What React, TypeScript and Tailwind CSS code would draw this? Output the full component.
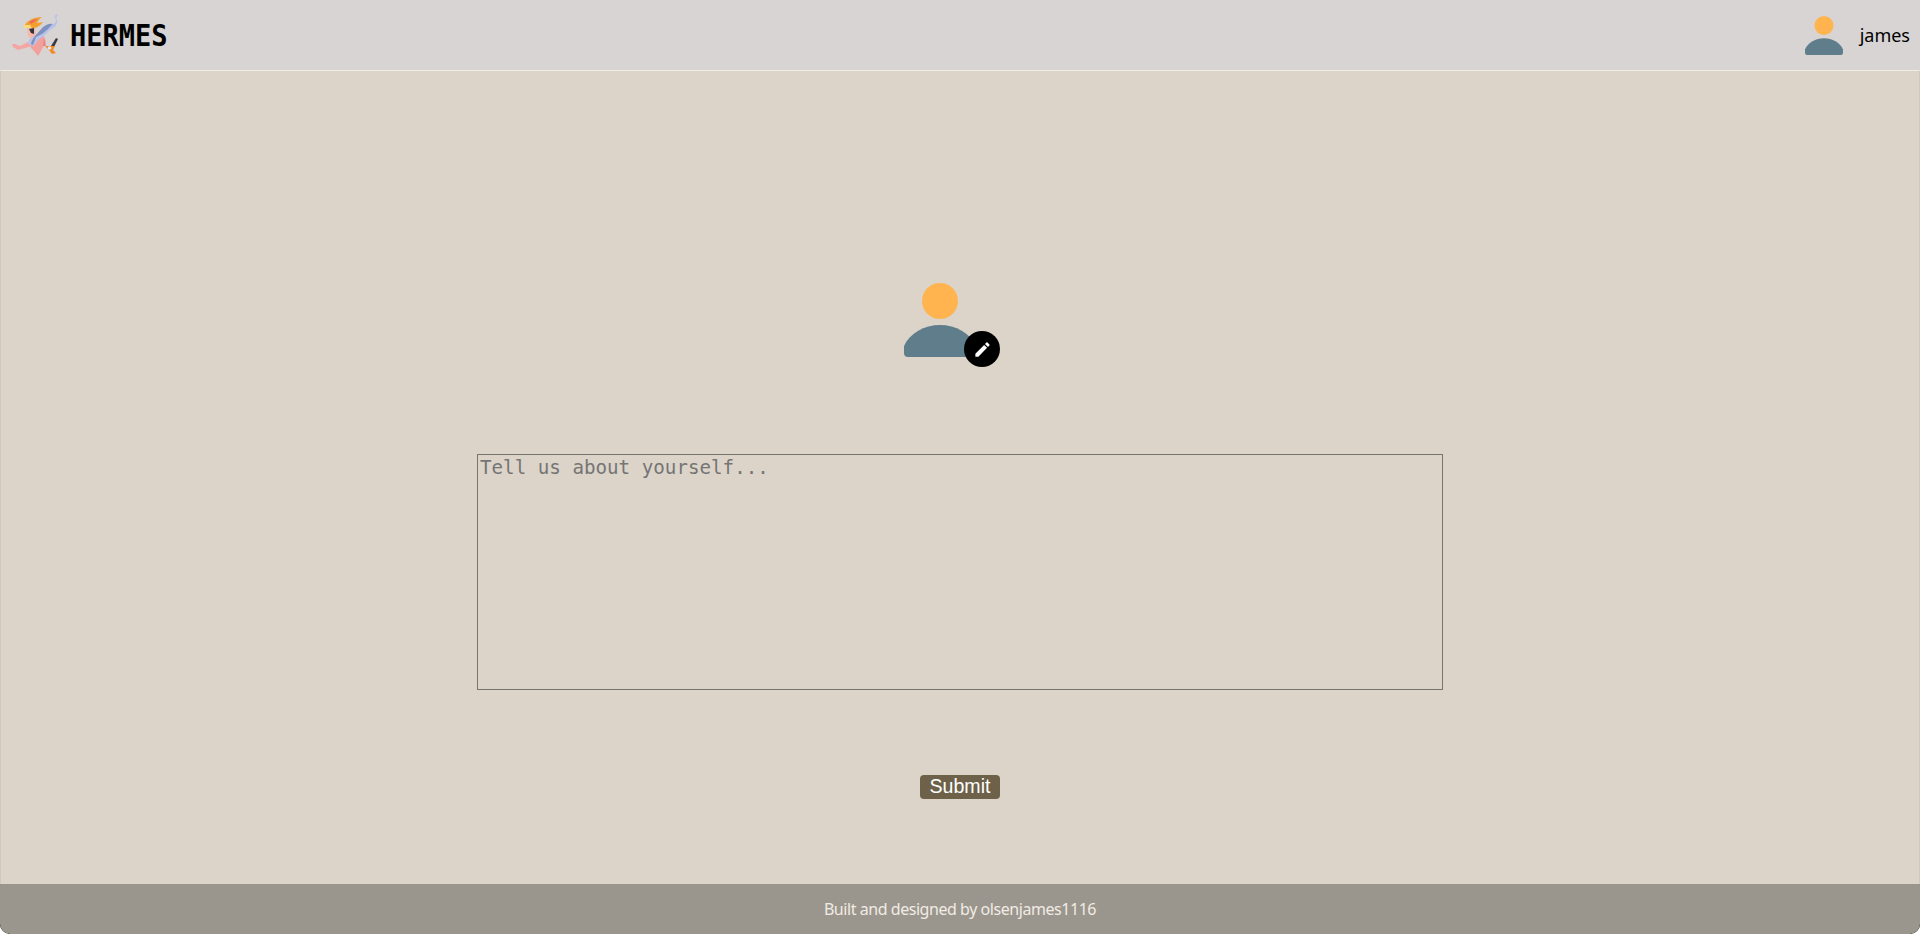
import React from "react";

function Person({ className }: { className: string }) {
  return (
    <svg viewBox="0 0 72 74" className={className}>
      <circle cx="36" cy="18" r="18" fill="#ffb44f" />
      <path d="M0 63 C6 50 20 42 36 42 C52 42 66 50 72 63 L72 70 Q72 74 68 74 L4 74 Q0 74 0 70 Z" fill="#607d8b" />
    </svg>
  );
}

function Logo() {
  return (
    <svg viewBox="10 10 50 50" className="w-[50px] h-[50px]">
      <path d="M32 46 L18 50 L13 47 L12 44 L15 44 L20 46 L28 42 Z" fill="#f3a6a2" />
      <path d="M29 40 L44 36 L46 42 L41 51 L38 56 L35 52 L31 48 Z" fill="#f2a09c" />
      <path d="M44 38 L46 46 L43 46 Z" fill="#e9838a" />
      <path d="M27 28 L35 27 L36 36 L32 40 L28 36 Z" fill="#f6b9a9" />
      <path d="M29 29 L34 28 L34 34 L31 33 Z" fill="#34343f" />
      <path d="M58 14 C53 15 55 18 56 20 C56 24 52 24 49 27 C46 30 42 31 38 33 L34 36 C30 38 28 41 28 44 L34 46 L38 40 L44 36 L50 30 C54 28 58 25 57 20 C55 17 58 16 58 14 Z" fill="#b9c3e6" />
      <path d="M43 27 C47 24 50 23 53 24 C51 25 50 27 48 29 L42 34 L36 37 L33 45 L31 44 C32 38 38 33 43 27 Z" fill="#7f90c2" />
      <path d="M24 26 C27 21 33 17 42 17 C39 19 38 21 37 23 C39 23 42 22 43 22 C41 25 38 27 35 28 L24 28 Z" fill="#f29f2e" />
      <path d="M24 25 L30 25 L32 28 L24 28 Z" fill="#f7dc7a" />
      <path d="M29 22 C32 20 35 19 38 19 C35 21 33 23 31 24 Z" fill="#f0695a" />
      <path d="M51 46 L56 38 L58 39 L54 47 Z" fill="#3a3a46" />
      <path d="M45 46 L55 46 L53 50 L56 53 L52 54 L49 50 Z" fill="#f08a24" />
      <circle cx="49.5" cy="48" r="1.8" fill="#e6e6ef" />
    </svg>
  );
}

export default function App() {
  return (
    <div className="relative h-[934px] flex flex-col overflow-hidden rounded-b-[10px] bg-black font-['Liberation_Sans',sans-serif]">
      <div className="flex-1 flex flex-col bg-[#dcd4c9] border-x border-[#cfc8be]">
        <header className="h-[71px] shrink-0 bg-[#d8d4d4] border-b border-[#efece6] flex items-center justify-between -mx-px">
          <div className="flex items-center pl-[10px]">
            <Logo />
            <span className="ml-[10px] text-[30px] font-bold text-black font-['DejaVu_Sans_Mono',monospace] scale-x-90 origin-left">HERMES</span>
          </div>
          <div className="flex items-center pr-[10px]">
            <Person className="w-[38px] h-[39px]" />
            <span className="ml-[17px] text-[18px] text-black font-['Noto_Sans',sans-serif]">james</span>
          </div>
        </header>
        <main className="flex-1 flex flex-col items-center">
          <div className="relative mt-[212px] mr-[40px] w-[72px] h-[74px]">
            <Person className="w-[72px] h-[74px]" />
            <div className="absolute left-[60px] top-[48px] w-9 h-9 rounded-full bg-black flex items-center justify-center">
              <svg viewBox="0 0 24 24" className="w-[19px] h-[19px]" fill="white">
                <path d="M3 17.25V21h3.75L17.81 9.94l-3.75-3.75L3 17.25zM20.71 7.04a1 1 0 0 0 0-1.41l-2.34-2.34a1 1 0 0 0-1.41 0l-1.83 1.83 3.75 3.75 1.83-1.83z" />
              </svg>
            </div>
          </div>
          <textarea
            placeholder="Tell us about yourself..."
            className="mt-[97px] w-[966px] h-[236px] border border-[#77736e] bg-transparent px-[2px] py-[2px] text-[19.2px] leading-[22px] font-['DejaVu_Sans_Mono',monospace] placeholder:text-[#757575] outline-none resize-none"
          />
          <button className="mt-[85px] w-[80px] h-[24px] rounded-[4px] bg-[#6e6149] text-white text-[19.6px] leading-none">Submit</button>
        </main>
      </div>
      <footer className="h-[50px] shrink-0 bg-[#9b968d] rounded-b-[10px] flex items-center justify-center text-[#f0ebe4] text-[16px] tracking-[-0.45px] font-['Noto_Sans',sans-serif]">
        Built and designed by olsenjames1116
      </footer>
    </div>
  );
}
